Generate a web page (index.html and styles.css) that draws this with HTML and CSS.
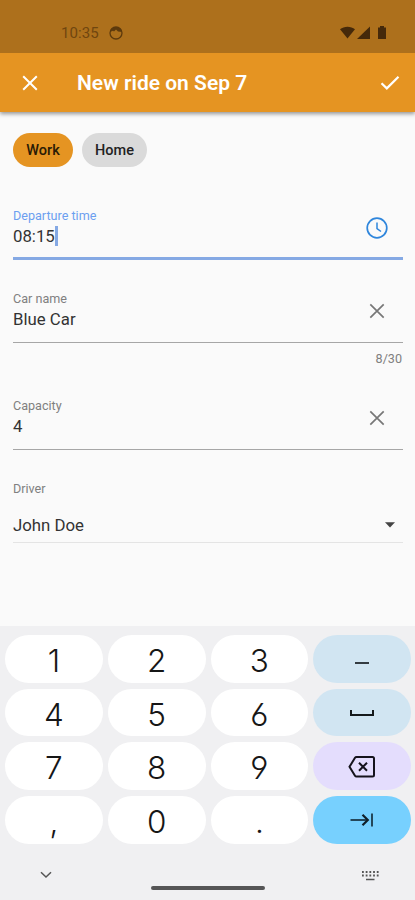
FILE: index.html
```html
<!DOCTYPE html>
<html lang="en">
<head>
    <meta charset="UTF-8">
    <meta name="viewport" content="width=device-width, initial-scale=1.0">
    <title>New ride</title>
    <link rel="stylesheet" href="styles.css">
</head>
<body>
    <div class="statusbar">
        <span class="clock">10:35</span>
        <svg class="status-face" width="14" height="14" viewBox="0 0 14 14">
            <circle cx="7" cy="7" r="6" fill="none" stroke="currentColor" stroke-width="1.3"/>
            <path d="M1 6L4 4.800L5 5.500L7 3.500L9 5.500L13 6C12.500 2.500 9.500 1 7 1S1.500 2.500 1 6Z" fill="currentColor"/>
        </svg>
        <svg class="status-icons" width="48" height="16" viewBox="0 0 48 16">
            <path d="M1 4.200C5 0.800 12 0.800 16 4.200L8.500 13.500Z" fill="currentColor"/>
            <path d="M18 14L31 1.500V14Z" fill="currentColor"/>
            <path d="M39 2.500H41V1H45V2.500H47V14H39Z" fill="currentColor"/>
        </svg>
    </div>

    <header class="appbar">
        <svg class="icon-close" width="16" height="16" viewBox="0 0 16 16">
            <path d="M1.200 1.200L14.800 14.800M14.800 1.200L1.200 14.800" stroke="currentColor" stroke-width="2"/>
        </svg>
        <h1>New ride on Sep 7</h1>
        <svg class="icon-check" width="20" height="16" viewBox="0 0 20 16">
            <path d="M1.500 8.200L6.800 13.400L18.500 1.700" fill="none" stroke="currentColor" stroke-width="2.200"/>
        </svg>
    </header>

    <main class="form">
        <div class="chips">
            <button class="chip chip-active" type="button">Work</button>
            <button class="chip" type="button">Home</button>
        </div>

        <div class="field field-focus">
            <div class="field-text">
                <span class="label">Departure time</span>
                <span class="value">08:15<i class="caret"></i></span>
            </div>
            <svg class="field-icon" width="24" height="24" viewBox="0 0 24 24">
                <circle cx="12" cy="12" r="9.800" fill="none" stroke="currentColor" stroke-width="1.700"/>
                <path d="M12 6.500V12.500L16 15.500" fill="none" stroke="currentColor" stroke-width="1.500"/>
            </svg>
        </div>

        <div class="field field-car">
            <div class="field-text">
                <span class="label">Car name</span>
                <span class="value">Blue Car</span>
            </div>
            <svg class="field-icon" width="24" height="24" viewBox="0 0 24 24">
                <path d="M5.300 5.300L18.700 18.700M18.700 5.300L5.300 18.700" stroke="currentColor" stroke-width="1.700"/>
            </svg>
        </div>
        <div class="counter">8/30</div>

        <div class="field field-capacity">
            <div class="field-text">
                <span class="label">Capacity</span>
                <span class="value">4</span>
            </div>
            <svg class="field-icon" width="24" height="24" viewBox="0 0 24 24">
                <path d="M5.300 5.300L18.700 18.700M18.700 5.300L5.300 18.700" stroke="currentColor" stroke-width="1.700"/>
            </svg>
        </div>

        <div class="driver">
            <span class="label">Driver</span>
            <div class="select">
                <span class="value">John Doe</span>
                <svg width="10" height="6" viewBox="0 0 10 6">
                    <path d="M0 0.300H10L5 5.500Z" fill="#444"/>
                </svg>
            </div>
        </div>
    </main>

    <section class="keyboard">
        <div class="keys">
            <button class="key" type="button">1</button>
            <button class="key" type="button">2</button>
            <button class="key" type="button">3</button>
            <button class="key key-blue" type="button">
                <svg width="28" height="28" viewBox="0 0 28 28"><path d="M7 18H21" stroke="#343c42" stroke-width="2"/></svg>
            </button>
            <button class="key" type="button">4</button>
            <button class="key" type="button">5</button>
            <button class="key" type="button">6</button>
            <button class="key key-blue" type="button">
                <svg width="28" height="28" viewBox="0 0 28 28"><path d="M3 11V16H25V11" fill="none" stroke="#15191c" stroke-width="2"/></svg>
            </button>
            <button class="key" type="button">7</button>
            <button class="key" type="button">8</button>
            <button class="key" type="button">9</button>
            <button class="key key-purple" type="button">
                <svg width="28" height="28" viewBox="0 0 28 28">
                    <path d="M8.500 5H24.500Q26 5 26 6.500V23Q26 24.500 24.500 24.500H8.500Q7.500 24.500 7 23.700L1.500 14.800L7 5.800Q7.500 5 8.500 5Z" fill="none" stroke="#15131c" stroke-width="2"/>
                    <path d="M11 10.700L19 18.700M19 10.700L11 18.700" stroke="#15131c" stroke-width="2"/>
                </svg>
            </button>
            <button class="key" type="button">,</button>
            <button class="key" type="button">0</button>
            <button class="key" type="button">.</button>
            <button class="key key-next" type="button">
                <svg width="28" height="28" viewBox="0 0 28 28">
                    <path d="M2.500 14H19" stroke="#24475a" stroke-width="2"/>
                    <path d="M14.500 8.700L19.800 14L14.500 19.300" fill="none" stroke="#10202a" stroke-width="2.200"/>
                    <path d="M24 7.500V20.500" stroke="#24475a" stroke-width="2"/>
                </svg>
            </button>
        </div>

        <div class="navbar">
            <svg width="12" height="8" viewBox="0 0 12 8">
                <path d="M1 1.200L6 6L11 1.200" fill="none" stroke="#555" stroke-width="1.500"/>
            </svg>
            <span class="home-handle"></span>
            <svg class="icon-keyboard" width="18" height="12" viewBox="0 0 18 12">
                <path d="M1 2H18M1 5.500H18" stroke="#555" stroke-width="1.800" stroke-dasharray="1.800 1.900"/>
                <path d="M5 9.500H13.500" stroke="#555" stroke-width="1.500"/>
            </svg>
        </div>
    </section>
</body>
</html>
```
FILE: styles.css
```css
* {
    box-sizing: border-box;
}
body {
    font-family: Roboto, sans-serif;
    margin: 0;
    width: 415px;
    height: 900px;
    display: flex;
    flex-direction: column;
    background: #fafafa;
    color: #333;
    overflow: hidden;
}
svg {
    display: block;
    flex: none;
}
button {
    border: 0;
    margin: 0;
    padding: 0;
}
.statusbar {
    height: 53px;
    padding: 13px 28px 0 61px;
    display: flex;
    align-items: center;
    background: #ad701c;
    color: #70460f;
}
.clock {
    font-size: 15px;
    letter-spacing: 0.1px;
}
.status-face {
    margin-left: 10px;
    color: #5d3a0d;
}
.status-icons {
    margin-left: auto;
    color: #45290a;
}
.appbar {
    height: 59px;
    padding: 0 15px 0 22px;
    display: flex;
    align-items: center;
    background: #e59422;
    color: #fff;
    box-shadow: 0 2px 4px rgba(0, 0, 0, 0.4);
    clip-path: inset(0 0 -8px 0);
}
.appbar h1 {
    margin: 0 auto 0 39px;
    font-size: 21px;
    font-weight: 600;
    line-height: 30px;
}
.form {
    flex: 1;
    padding: 21px 12px 0 13px;
}
.chips {
    display: flex;
    gap: 9px;
    margin-bottom: 38px;
}
.chip {
    width: 65px;
    height: 34px;
    border-radius: 17px;
    background: #dadada;
    color: #222;
    font: 500 14.5px Roboto, sans-serif;
}
.chip-active {
    width: 60px;
    background: #e59422;
    color: #2b1b05;
}
.field {
    display: flex;
    justify-content: space-between;
    height: 55px;
    border-bottom: 1px solid #a6a6a6;
}
.field-text {
    display: flex;
    flex-direction: column;
    padding-top: 2px;
}
.label {
    display: block;
    font-size: 12.6px;
    line-height: 18px;
    color: #808080;
}
.value {
    display: flex;
    align-items: center;
    font-size: 16.8px;
    line-height: 22px;
}
.field-icon {
    margin: 11px 14px 0 0;
    color: #777;
}
.field-focus {
    border-bottom: 3px solid #85a9e4;
}
.field-focus .label {
    color: #6c9ff0;
}
.field-focus .field-icon {
    color: #2f86dc;
}
.caret {
    width: 3px;
    height: 20px;
    background: #85a9e4;
}
.field-car {
    margin-top: 28px;
}
.counter {
    height: 32px;
    padding-right: 1px;
    text-align: right;
    font-size: 12.6px;
    line-height: 31px;
    color: #808080;
}
.field-capacity {
    margin-top: 20px;
}
.driver {
    margin-top: 30px;
}
.select {
    display: flex;
    justify-content: space-between;
    align-items: center;
    height: 45px;
    padding: 10px 8px 0 0;
    border-bottom: 1px solid #e4e4e4;
}
.keyboard {
    height: 274px;
    padding: 9px 4px 0 5px;
    background: #f0f0f2;
}
.keys {
    display: grid;
    grid-template-columns: repeat(4, 1fr);
    grid-auto-rows: 47.8px;
    gap: 5.9px 5px;
}
.key {
    display: flex;
    justify-content: center;
    align-items: center;
    border-radius: 24px;
    background: #fff;
    color: #161616;
    font: 350 31.5px Inter, sans-serif;
    font-feature-settings: "cv03", "cv04";
    padding-top: 3px;
}
.key svg {
    margin-top: -3px;
}
.key-blue {
    background: #d1e5f2;
}
.key-purple {
    background: #e4ddfd;
}
.key-next {
    background: #77d0fe;
}
.navbar {
    display: flex;
    justify-content: space-between;
    padding: 27px 32px 0 35px;
}
.home-handle {
    width: 114px;
    height: 4px;
    margin: 15px 0 0 3px;
    border-radius: 2px;
    background: #555556;
}
.icon-keyboard {
    margin-top: -1px;
}
```
